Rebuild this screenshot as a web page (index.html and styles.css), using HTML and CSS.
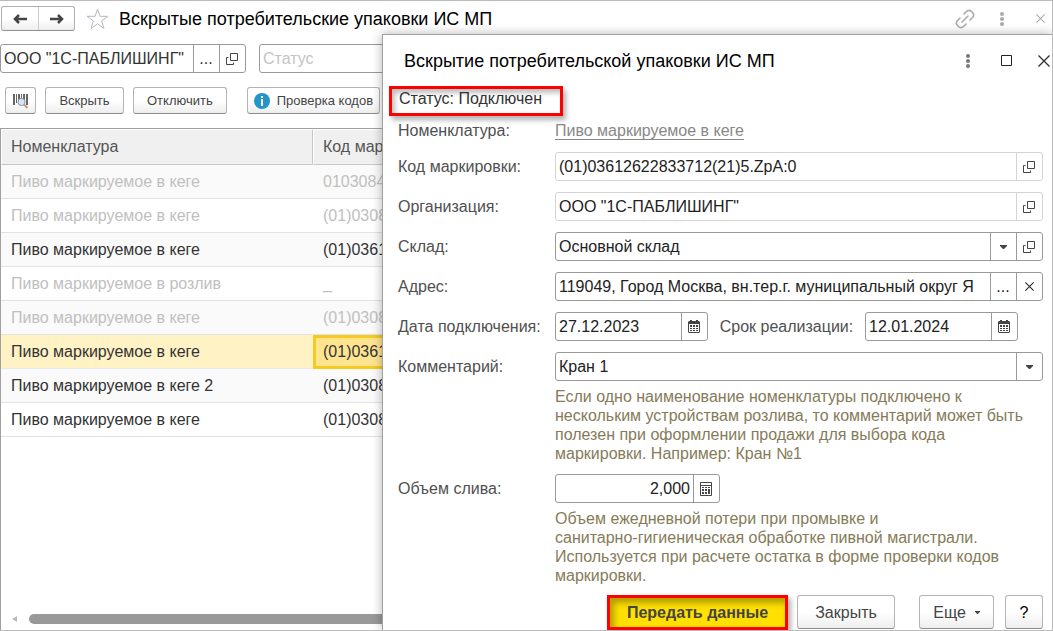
FILE: index.html
```
<!DOCTYPE html>
<html lang="ru">
<head>
<meta charset="utf-8">
<title>Вскрытые потребительские упаковки ИС МП</title>
<link rel="stylesheet" href="styles.css">
</head>
<body>
<svg class="sprite" aria-hidden="true">
  <symbol id="open" viewBox="0 0 12 12"><path d="M4.500.5h7v7h-7zM2.500 4.500h-2v7h7v-2" fill="none" stroke="#444"/></symbol>
  <symbol id="calendar" viewBox="0 0 12 13"><path fill="#444" fill-rule="evenodd" d="M1 1h1V0h2v1h4V0h2v1h1l1 1v10l-1 1H1l-1-1V2zm0 3v8h10V4zM2 5h2v2H2zm3 0h2v2H5zm3 0h2v2H8zM2 8h2v1H2zm3 0h2v1H5zm3 0h2v1H8zM2 10h2v1H2zm3 0h2v1H5zm3 0h2v1H8z"/></symbol>
  <symbol id="calc" viewBox="0 0 12 14"><path d="M.5.5h11v13H.5zM1 3.500h10" fill="none" stroke="#444"/><path fill="#444" d="M2 5h2v1H2zm3 0h2v1H5zm3 0h2v1H8zM2 7h2v2H2zm3 0h2v2H5zm3 0h2v5H8zM2 10h2v2H2zm3 0h2v2H5z"/></symbol>
  <symbol id="down" viewBox="0 0 7 4"><path fill="#444" d="M0 0h7v1L4 4H3L0 1z"/></symbol>
  <symbol id="dots" viewBox="0 0 4 14"><g fill="currentColor"><circle cx="2" cy="2" r="2"/><circle cx="2" cy="7" r="2"/><circle cx="2" cy="12" r="2"/></g></symbol>
  <symbol id="cross" viewBox="0 0 12 12"><path d="M.5.5l11 11m0-11l-11 11" fill="none" stroke="currentColor" stroke-width="1.400"/></symbol>
</svg>
<main class="window">
  <header class="titlebar">
    <div class="history">
      <button aria-label="Назад"><svg width="14" height="10" viewBox="0 0 14 10"><path d="M14 5H3M6 1L2 5l4 4" fill="none" stroke="#444" stroke-width="2.500"/></svg></button>
      <button aria-label="Вперед"><svg width="14" height="10" viewBox="0 0 14 10"><path d="M0 5h11M8 1l4 4-4 4" fill="none" stroke="#444" stroke-width="2.500"/></svg></button>
    </div>
    <button class="plain star" aria-label="В избранное"><svg width="23" height="22" viewBox="0 0 23 22"><path d="M11.500 1.200L14 8.300h8l-6.400 4.600 2.400 7.600-6.500-4.700L5 20.500l2.400-7.600L1 8.300h8z" fill="none" stroke="#b4bac0"/></svg></button>
    <h1 class="title">Вскрытые потребительские упаковки ИС МП</h1>
    <div class="tools">
      <button class="plain" aria-label="Ссылка"><svg width="20" height="20" viewBox="0 0 20 20"><g fill="none" stroke="#aaa" stroke-width="1.600" stroke-linecap="round"><path d="M9 5l2.500-2.500a3.600 3.600 0 0 1 5 0l1 1a3.600 3.600 0 0 1 0 5L15 11M11 15l-2.500 2.500a3.600 3.600 0 0 1-5 0l-1-1a3.600 3.600 0 0 1 0-5L5 9M7 13l6-6"/></g></svg></button>
      <button class="plain" aria-label="Меню окна"><svg width="4" height="14"><use href="#dots"/></svg></button>
      <button class="plain" aria-label="Закрыть окно"><svg width="9" height="9"><use href="#cross"/></svg></button>
    </div>
  </header>
  <div class="filters">
    <div class="field org-filter"><input aria-label="Организация" value='ООО "1С-ПАБЛИШИНГ"'><button aria-label="Выбрать">...</button><button aria-label="Открыть"><svg width="12" height="12"><use href="#open"/></svg></button></div>
    <div class="field status-filter"><input aria-label="Статус" placeholder="Статус"></div>
  </div>
  <div class="toolbar">
    <button class="btn scan" aria-label="Сканировать"><svg width="16" height="16" viewBox="0 0 16 16"><path d="M0 1h2v11H0zM3 1h1v9H3zM5 1h2v9H5zM8 1h1v7H8zM10 1h2v7h-2zM13 1h2v11h-2z" fill="#666"/><circle cx="8.500" cy="9" r="3.600" fill="#d5e5f3" stroke="#8797aa"/><path d="M11 11.500l3.500 3.500" stroke="#c79776" stroke-width="2"/></svg></button>
    <button class="btn open">Вскрыть</button>
    <button class="btn">Отключить</button>
    <button class="btn check"><svg width="16" height="16" viewBox="0 0 16 16"><circle cx="8" cy="8" r="8" fill="#2495c9"/><path d="M7 3h2v2H7zM7 6h2v7H7z" fill="#fff"/></svg>Проверка кодов</button>
  </div>
  <div class="list">
    <table>
      <thead><tr><th>Номенклатура</th><th>Код маркировки</th></tr></thead>
      <tbody>
        <tr class="off"><td>Пиво маркируемое в кеге</td><td>0103084</td></tr>
        <tr class="off"><td>Пиво маркируемое в кеге</td><td>(01)0308</td></tr>
        <tr><td>Пиво маркируемое в кеге</td><td>(01)0361</td></tr>
        <tr class="off"><td>Пиво маркируемое в розлив</td><td>_</td></tr>
        <tr class="off"><td>Пиво маркируемое в кеге</td><td>(01)0308</td></tr>
        <tr class="selected"><td>Пиво маркируемое в кеге</td><td>(01)0361</td></tr>
        <tr><td>Пиво маркируемое в кеге 2</td><td>(01)0308</td></tr>
        <tr><td>Пиво маркируемое в кеге</td><td>(01)0308</td></tr>
      </tbody>
    </table>
    <div class="scroll"><svg width="5" height="6" viewBox="0 0 5 6"><path d="M5 0v6L0 3z" fill="#bbb"/></svg><div class="thumb"></div></div>
  </div>

  <section class="dialog" role="dialog" aria-labelledby="dialog-title">
    <header class="dialog-head">
      <h2 class="title" id="dialog-title">Вскрытие потребительской упаковки ИС МП</h2>
      <div class="dialog-tools">
        <button class="plain" aria-label="Меню"><svg width="4" height="14"><use href="#dots"/></svg></button>
        <button class="plain" aria-label="Развернуть"><svg width="11" height="11"><path d="M.5.5h10v10H.5z" fill="none" stroke="#222"/></svg></button>
        <button class="plain" aria-label="Закрыть"><svg width="12" height="12"><use href="#cross"/></svg></button>
      </div>
    </header>
    <div class="status">Статус: Подключен</div>
    <form class="form">
      <span class="short">Номенклатура:</span>
      <a class="short" href="#">Пиво маркируемое в кеге</a>

      <label for="code">Код маркировки:</label>
      <div class="field readonly"><input id="code" readonly value="(01)03612622833712(21)5.ZpA:0"><button type="button" aria-label="Открыть"><svg width="12" height="12"><use href="#open"/></svg></button></div>

      <label for="org">Организация:</label>
      <div class="field readonly"><input id="org" readonly value='ООО "1С-ПАБЛИШИНГ"'><button type="button" aria-label="Открыть"><svg width="12" height="12"><use href="#open"/></svg></button></div>

      <label for="store">Склад:</label>
      <div class="field"><div class="combo"><select id="store"><option>Основной склад</option></select><span class="arrow"><svg width="7" height="4"><use href="#down"/></svg></span></div><button type="button" aria-label="Открыть"><svg width="12" height="12"><use href="#open"/></svg></button></div>

      <label for="address">Адрес:</label>
      <div class="field"><input id="address" value="119049, Город Москва, вн.тер.г. муниципальный округ Я"><button type="button" aria-label="Выбрать">...</button><button type="button" aria-label="Очистить"><svg width="9" height="9"><use href="#cross"/></svg></button></div>

      <label for="from">Дата подключения:</label>
      <div class="dates">
        <div class="field date"><input id="from" value="27.12.2023"><button type="button" aria-label="Календарь"><svg width="12" height="13"><use href="#calendar"/></svg></button></div>
        <label for="till">Срок реализации:</label>
        <div class="field date"><input id="till" value="12.01.2024"><button type="button" aria-label="Календарь"><svg width="12" height="13"><use href="#calendar"/></svg></button></div>
      </div>

      <label for="comment">Комментарий:</label>
      <div class="field"><input id="comment" value="Кран 1"><button type="button" aria-label="Список"><svg width="7" height="4"><use href="#down"/></svg></button></div>
      <p class="hint">Если одно наименование номенклатуры подключено к<br>нескольким устройствам розлива, то комментарий может быть<br>полезен при оформлении продажи для выбора кода<br>маркировки. Например: Кран №1</p>

      <label for="volume">Объем слива:</label>
      <div class="field volume"><input id="volume" value="2,000"><button type="button" aria-label="Калькулятор"><svg width="12" height="14"><use href="#calc"/></svg></button></div>
      <p class="hint">Объем ежедневной потери при промывке и<br>санитарно-гигиеническая обработке пивной магистрали.<br>Используется при расчете остатка в форме проверки кодов<br>маркировки.</p>
    </form>
    <footer class="actions">
      <button class="primary">Передать данные</button>
      <button class="btn close">Закрыть</button>
      <button class="btn more">Еще <svg width="5" height="3" viewBox="0 0 7 4"><use href="#down"/></svg></button>
      <button class="btn help">?</button>
    </footer>
  </section>
</main>
</body>
</html>
```

FILE: styles.css
```
* { box-sizing: border-box; }

body {
  margin: 0;
  background: #fff;
  color: #333;
  font: 16px/19px "Liberation Sans", Arial, sans-serif;
}

button, input, select { margin: 0; font: inherit; color: inherit; }
button { display: flex; align-items: center; justify-content: center; padding: 0; }
svg { display: block; flex: none; }
.sprite { position: absolute; width: 0; height: 0; }

.window {
  position: relative;
  display: flex;
  flex-direction: column;
  min-height: 100vh;
  overflow: hidden;
  border: solid #bbb;
  border-width: 1px 1px 1px 0;
}

.title { margin: 0; color: #000; font-size: 18px; font-weight: 400; line-height: 22px; white-space: nowrap; }
.plain { border: 0; background: none; }

/* Main window header */
.titlebar { display: flex; align-items: center; height: 35px; padding: 0 7px 0 1px; }
.history {
  display: flex;
  border: 1px solid #b0b0b0;
  border-bottom-color: #909090;
  border-radius: 3px;
  background: linear-gradient(#fff 50%, #eee);
}
.history button { width: 36px; height: 23px; border: 0; background: none; }
.history button + button { border-left: 1px solid #ccc; }
.star { margin: 0 10px 0 11px; }
.tools { display: flex; align-items: center; margin-left: auto; color: #aaa; }
.tools button + button { margin-left: 25px; }
.tools button:last-child { margin-left: 32px; }

/* Fields */
.field {
  display: flex;
  height: 29px;
  min-width: 0;
  overflow: hidden;
  border: 1px solid #999;
  border-radius: 3px;
  background: #fff;
}
.field input, .field select {
  flex: 1;
  width: 100%;
  min-width: 0;
  padding: 0 3px;
  border: 0;
  outline: 0;
  background: none;
  appearance: none;
}
.field button, .arrow { flex: none; width: 26px; padding-right: 1px; border: 0; border-left: 1px solid #999; background: none; }
.field input::placeholder { color: #c4c4c4; }
.readonly, .readonly button { border-color: #d4d4d4; }
.combo { display: flex; flex: 1; }
.arrow { display: flex; align-items: center; justify-content: center; }

.filters { display: flex; gap: 13px; margin-top: 8px; }
.org-filter { width: 246px; }
.status-filter { width: 200px; }

/* Buttons */
.btn {
  border: 1px solid #b4b4b4;
  border-bottom-color: #8c8c8c;
  border-radius: 3px;
  background: linear-gradient(#fff 50%, #eee);
  color: #444;
}
.toolbar { display: flex; gap: 9px; margin: 14px 0 14px 5px; }
.toolbar .btn { height: 27px; padding: 0 13px; font-size: 13px; }
.toolbar .scan { width: 31px; padding: 0; }
.toolbar .open { width: 79px; }
.toolbar .check { gap: 7px; margin-left: 11px; padding: 0 6px; }

/* List */
.list {
  display: flex;
  flex: 1;
  flex-direction: column;
  border: solid #a0a0a0;
  border-width: 1px 0 0 1px;
}
table { width: 100%; border-collapse: separate; border-spacing: 0; table-layout: fixed; }
th, td { height: 34px; padding: 0 10px; border-bottom: 1px solid #e2e2e2; text-align: left; white-space: nowrap; }
th { height: 36px; padding: 0 9px 2px; border: 1px solid #fff; border-bottom-color: #c8c8c8; background: #f0f0f0; color: #555; font-weight: 400; }
th:first-child { width: 312px; border-right-color: #c8c8c8; }
tr:nth-child(odd) td { background: #fafafa; }
.off { color: #c0c0c0; }
.selected td { border-bottom-color: #e8e8f0; background: #fff2c5; }
.selected td:last-child { padding: 0 7px 1px; border: 3px solid #f8c91e; background: #ffe490; }
.scroll { display: flex; align-items: center; gap: 12px; margin-top: auto; padding: 0 0 6px 11px; }
.thumb { flex: 1; height: 10px; border-radius: 5px; background: #999; }

/* Dialog window over the list */
.dialog {
  position: absolute;
  top: 33px;
  right: 0;
  bottom: 0;
  left: 382px;
  display: flex;
  flex-direction: column;
  padding: 0 9px 0 15px;
  border: solid #a0a0a0;
  border-width: 1px 0 0 1px;
  background: #fff;
  box-shadow: 0 0 10px rgba(0, 0, 0, .3);
}
.dialog-head { display: flex; align-items: center; justify-content: space-between; height: 51px; padding-left: 6px; }
.dialog-tools { display: flex; align-items: center; margin-right: -7px; color: #333; }
.dialog-tools button:first-child { margin-right: 31px; color: #777; }
.dialog-tools button:last-child { margin-left: 26px; }
.status {
  align-self: flex-start;
  width: 174px;
  height: 30px;
  margin-left: -9px;
  padding: 0 7px;
  border: 3px solid #f00;
  box-shadow: 3px 4px 5px rgba(0, 0, 0, .3), inset 3px 4px 5px rgba(0, 0, 0, .25);
}
.form {
  display: grid;
  grid-template-columns: 157px 1fr;
  align-items: center;
  row-gap: 11px;
  margin-top: 5px;
  color: #505050;
  white-space: nowrap;
}
.form .field { color: #222; }
.form a { justify-self: start; color: #888; text-underline-offset: 3px; }
.short { height: 20px; }
.dates { display: flex; align-items: center; justify-content: space-between; padding-right: 25px; }
.date { width: 153px; }
.volume { width: 165px; }
.volume input { text-align: right; }
.hint { grid-column: 2; margin: -5px 0 0; color: #857b58; }

.actions { display: flex; margin-top: auto; padding-left: 209px; }
.actions .btn { height: 34px; }
.primary {
  width: 181px;
  height: 35px;
  border: 3px solid #f00;
  background: #ffe000;
  box-shadow: 3px 3px 5px rgba(0, 0, 0, .3), inset 4px 5px 6px rgba(0, 0, 0, .3);
  color: #444;
  font-weight: 700;
}
.close { width: 98px; margin-left: 9px; }
.more { gap: 9px; width: 75px; margin-left: auto; }
.help { width: 38px; margin-left: 11px; color: #000; }
```
